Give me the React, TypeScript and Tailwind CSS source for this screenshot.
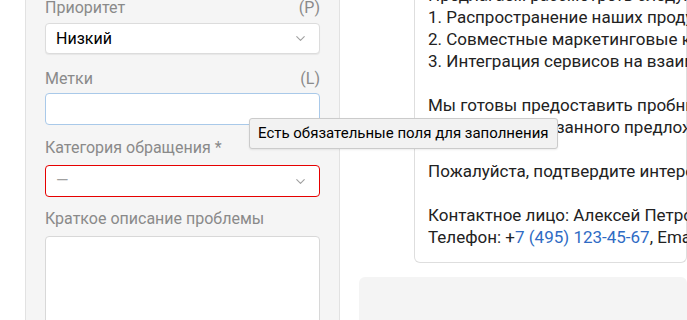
import { ChevronDown } from 'lucide-react';

export default function App() {
  return (
    <div className="relative flex h-[320px] w-[687px] overflow-hidden bg-white font-['Roboto',sans-serif]">
      {/* Left sidebar form */}
      <div className="ml-[25px] h-full w-[315px] shrink-0 border-x border-[#e2e2e2] bg-[#f5f5f5] px-[19px]">
        <div className="-mt-[2px]">
          <div className="flex justify-between text-[16px] leading-[20px] text-[#8a8a8a]">
            <span>Приоритет</span>
            <span>(P)</span>
          </div>
          <div className="mt-[5px] flex h-[31px] items-center justify-between rounded-[4px] border border-[#dcdcdc] bg-white pl-[10px] pr-[11px] shadow-[0_1px_1px_rgba(0,0,0,0.06)]">
            <span className="text-[16px] text-black">Низкий</span>
            <ChevronDown size={15} strokeWidth={1.75} className="text-[#a0a0a0]" />
          </div>

          <div className="mt-[15px] flex justify-between text-[16px] leading-[20px] text-[#8a8a8a]">
            <span>Метки</span>
            <span>(L)</span>
          </div>
          <div className="mt-[4px] h-[32px] rounded-[4px] border border-[#a9c9e9] bg-white" />

          <div className="mt-[13px] text-[16px] leading-[20px] text-[#8a8a8a]">Категория обращения *</div>
          <div className="mt-[7px] flex h-[32px] items-center justify-between rounded-[4px] border border-[#e60000] bg-white pl-[10px] pr-[11px]">
            <span className="text-[16px] text-[#a0a0a0]">—</span>
            <ChevronDown size={15} strokeWidth={1.75} className="text-[#a0a0a0]" />
          </div>

          <div className="mt-[12px] text-[16px] leading-[20px] text-[#8a8a8a]">Краткое описание проблемы</div>
          <div className="mt-[7px] h-[120px] rounded-[4px] border border-[#d8d8d8] bg-white" />
        </div>
      </div>

      {/* Right message area */}
      <div className="min-w-0 flex-1">
        <div className="-mt-[24px] ml-[74px] rounded-b-[6px] border border-t-0 border-[#dedede] bg-white pb-[14px] pl-[13px] pt-[8px]">
          <div className="whitespace-pre text-[17px] leading-[22px] text-[#222]">
            <div>Предлагаем рассмотреть следующие направления сотрудничества:</div>
            <div>1. Распространение наших продуктов через вашу партнерскую сеть</div>
            <div>2. Совместные маркетинговые кампании</div>
            <div>3. Интеграция сервисов на взаимовыгодных условиях</div>
            <div>&nbsp;</div>
            <div>Мы готовы предоставить пробный период и индивидуальные условия для</div>
            <div>обсуждения указанного предложения.</div>
            <div>&nbsp;</div>
            <div>Пожалуйста, подтвердите интерес к сотрудничеству.</div>
            <div>&nbsp;</div>
            <div>Контактное лицо: Алексей Петров, руководитель отдела партнерств</div>
            <div>
              Телефон: +<span className="text-[#2f6bc4]">7 (495) 123-45-67</span>, Email: a.petrov@example.ru
            </div>
          </div>
        </div>
        <div className="ml-[19px] mt-[14px] h-[60px] rounded-[6px] bg-[#f4f4f4]" />
      </div>

      {/* Tooltip */}
      <div className="absolute left-[249px] top-[118px] rounded-[3px] border border-[#cbcbcb] bg-[#f2f2f2] px-[8px] py-[5px] text-[15px] leading-[19px] text-black shadow-[0_1px_2px_rgba(0,0,0,0.08)]">
        Есть обязательные поля для заполнения
      </div>
    </div>
  );
}
